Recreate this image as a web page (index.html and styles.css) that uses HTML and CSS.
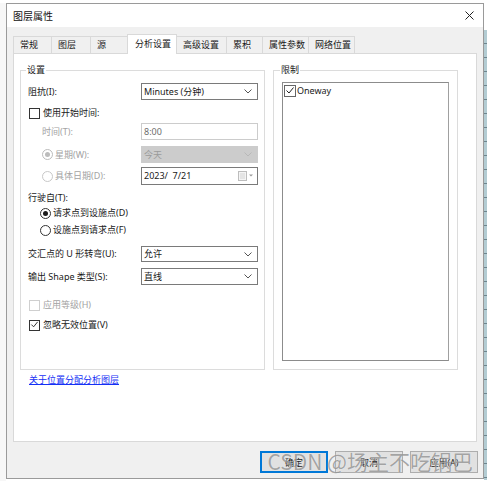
FILE: index.html
```html
<!DOCTYPE html>
<html lang="zh">
<head>
<meta charset="utf-8">
<title>图层属性</title>
<link rel="stylesheet" href="styles.css">
</head>
<body>
<div class="screen">
  <div class="gutter"></div>
  <div class="window">
    <div class="titlebar">
      <span class="title">图层属性</span>
      <svg class="close" width="9" height="9" viewBox="0 0 9 9"><path d="M0.5 0.5L8.5 8.5M8.5 0.5L0.5 8.5" stroke="#222" stroke-width="1"/></svg>
    </div>
    <div class="client">
      <div class="tabs">
        <div class="tab w38">常规</div>
        <div class="tab w39">图层</div>
        <div class="tab w37">源</div>
        <div class="tab w50 active">分析设置</div>
        <div class="tab w49">高级设置</div>
        <div class="tab w36">累积</div>
        <div class="tab w46">属性参数</div>
        <div class="tab w47">网络位置</div>
      </div>
      <div class="panel">
        <div class="groups">
          <fieldset class="group left">
            <legend>设置</legend>
            <div class="row r1">
              <span class="label">阻抗(I):</span>
              <div class="select"><span>Minutes (分钟)</span><svg width="8" height="5" viewBox="0 0 8 5"><path d="M0.5 0.5L4 4L7.5 0.5" fill="none" stroke="#555"/></svg></div>
            </div>
            <div class="row r2">
              <span class="cb"></span><span class="cbtext">使用开始时间:</span>
            </div>
            <div class="row r3">
              <span class="label dis indent">时间(T):</span>
              <div class="input dis-input"><span>8:00</span></div>
            </div>
            <div class="row r4">
              <span class="radio checked-dis indent-r"></span><span class="rtext dis">星期(W):</span>
              <div class="select dis-select"><span>今天</span><svg width="8" height="5" viewBox="0 0 8 5"><path d="M0.5 0.5L4 4L7.5 0.5" fill="none" stroke="#b8b8b8"/></svg></div>
            </div>
            <div class="row r5">
              <span class="radio dis-r indent-r"></span><span class="rtext dis">具体日期(D):</span>
              <div class="input date"><span>2023/&nbsp; 7/21</span>
                <span class="cal"><svg width="16" height="10" viewBox="0 0 16 10"><rect x="0.5" y="0.5" width="8" height="9" fill="#f4f4f4" stroke="#bdbdbd"/><path d="M2 3H7M2 5H7M2 7H7" stroke="#d4d4d4"/><path d="M11 3.5L13 5.5L15 3.5Z" fill="#9a9a9a"/></svg></span>
              </div>
            </div>
            <div class="row r6">
              <span class="label">行驶自(T):</span>
            </div>
            <div class="row r7">
              <span class="radio on indent-r2"></span><span class="rtext">请求点到设施点(D)</span>
            </div>
            <div class="row r8">
              <span class="radio indent-r2"></span><span class="rtext">设施点到请求点(F)</span>
            </div>
            <div class="row r9">
              <span class="label">交汇点的 U 形转弯(U):</span>
              <div class="select sel16"><span>允许</span><svg width="8" height="5" viewBox="0 0 8 5"><path d="M0.5 0.5L4 4L7.5 0.5" fill="none" stroke="#555"/></svg></div>
            </div>
            <div class="row r10">
              <span class="label">输出 Shape 类型(S):</span>
              <div class="select"><span>直线</span><svg width="8" height="5" viewBox="0 0 8 5"><path d="M0.5 0.5L4 4L7.5 0.5" fill="none" stroke="#555"/></svg></div>
            </div>
            <div class="row r11">
              <span class="cb cb-dis"></span><span class="cbtext dis">应用等级(H)</span>
            </div>
            <div class="row r12">
              <span class="cb"><svg width="10" height="10" viewBox="0 0 10 10"><path d="M1.5 4.5L4 7L8.5 1.5" fill="none" stroke="#222" stroke-width="1"/></svg></span><span class="cbtext">忽略无效位置(V)</span>
            </div>
          </fieldset>
          <fieldset class="group right">
            <legend>限制</legend>
            <div class="listbox">
              <div class="item">
                <span class="cb cb-item"><svg width="10" height="10" viewBox="0 0 10 10"><path d="M1.5 4.5L4 7L8.5 1.5" fill="none" stroke="#222" stroke-width="1"/></svg></span><span class="itemtext">Oneway</span>
              </div>
            </div>
          </fieldset>
        </div>
        <a class="link" href="#">关于位置分配分析图层</a>
      </div>
      <div class="buttons">
        <div class="btn default">确定</div>
        <div class="btn">取消</div>
        <div class="btn">应用(A)</div>
        <div class="watermark">CSDN @场主不吃锅巴</div>
      </div>
    </div>
  </div>
  <div class="strip"></div>
</div>
</body>
</html>
```

FILE: styles.css
```css
* { box-sizing: border-box; }
html, body { margin: 0; padding: 0; }
body {
  width: 487px;
  height: 481px;
  overflow: hidden;
  background: #ffffff;
  font-family: "Noto Sans", "Noto Sans CJK SC", sans-serif;
  font-size: 9px;
  color: #1a1a1a;
}
.screen {
  display: flex;
  height: 481px;
  padding-top: 3px;
}
.gutter { width: 6px; flex: none; background: #f7f7f7; }
.window {
  width: 478px;
  height: 476px;
  flex: none;
  border: 1px solid #9a9a9a;
  display: flex;
  flex-direction: column;
  background: #f0f0f0;
}
.strip {
  width: 3px;
  flex: none;
  margin-top: 27px;
  height: 450px;
  background: repeating-linear-gradient(180deg, #b3ccd3 0, #b3ccd3 13px, #6d858e 13px, #6d858e 14px);
}
.titlebar {
  height: 23px;
  flex: none;
  background: #ffffff;
  display: flex;
  align-items: center;
  justify-content: space-between;
  padding: 0 9px 0 6px;
}
.title { font-size: 10px; line-height: 12px; color: #111; }
.close { display: block; }
.client {
  flex: 1;
  display: flex;
  flex-direction: column;
  padding: 0 5px 0 6px;
}
.tabs {
  display: flex;
  align-items: flex-end;
  height: 19px;
  margin-top: 7px;
  position: relative;
  z-index: 2;
}
.tab {
  height: 17px;
  border: 1px solid #d9d9d9;
  border-bottom: none;
  border-right: none;
  background: #f0f0f0;
  padding-left: 6px;
  line-height: 16px;
  color: #1a1a1a;
  white-space: nowrap;
}
.tab:last-child { border-right: 1px solid #d9d9d9; }
.tab.active {
  height: 20px;
  background: #ffffff;
  border-right: 1px solid #d9d9d9;
  margin-bottom: -1px;
  padding-left: 7px;
  line-height: 17px;
}
.tab.active + .tab { border-left: none; }
.w36 { width: 36px; }
.w37 { width: 37px; }
.w38 { width: 38px; }
.w39 { width: 39px; }
.w46 { width: 46px; }
.w47 { width: 47px; }
.w49 { width: 49px; }
.w50 { width: 50px; }
.panel {
  width: 464px;
  height: 389px;
  background: #ffffff;
  border: 1px solid #d9d9d9;
  padding: 0 6px;
  display: flex;
  flex-direction: column;
}
.groups {
  display: flex;
  gap: 8px;
  margin-top: 10px;
}
.group {
  margin: 0;
  border: 1px solid #dcdcdc;
  height: 306px;
  display: flex;
  flex-direction: column;
  min-width: 0;
}
.group legend {
  padding: 0 1px;
  margin-left: -2px;
  line-height: 12px;
  height: 12px;
  color: #1a1a1a;
}
.group.left { width: 245px; padding: 7px 6px 0 7px; }
.group.right { width: 185px; padding: 6px 8px 0 8px; }
.row {
  display: flex;
  align-items: center;
  flex: none;
  line-height: 12px;
}
.r1 { height: 17px; }
.r2 { height: 16px; margin-top: 5px; }
.r3 { height: 17px; margin-top: 2px; }
.r4 { height: 17px; margin-top: 6px; }
.r5 { height: 18px; margin-top: 4px; }
.r6 { height: 14px; margin-top: 6px; }
.r7 { height: 14px; margin-top: 1px; }
.r8 { height: 14px; margin-top: 3px; }
.r9 { height: 16px; margin-top: 9px; }
.r10 { height: 17px; margin-top: 6px; }
.r11 { height: 14px; margin-top: 13px; }
.r12 { height: 14px; margin-top: 6px; }
.label { width: 113px; flex: none; white-space: nowrap; }
.indent { padding-left: 14px; }
.dis { color: #a3a3a3; }
.select, .input {
  width: 117px;
  height: 100%;
  flex: none;
  border: 1px solid #7a7a7a;
  background: #ffffff;
  display: flex;
  align-items: center;
  justify-content: space-between;
  padding: 0 5px 0 2px;
  white-space: nowrap;
}
.sel16 { height: 16px; }
.dis-input { border-color: #cccccc; color: #6d6d6d; }
.dis-select { background: #cccccc; border-color: #cccccc; color: #9b9b9b; }
.date { border-color: #7a7a7a; padding-right: 3px; }
.cal { display: flex; }
.cb {
  width: 11px;
  height: 11px;
  flex: none;
  border: 1px solid #333333;
  background: #ffffff;
  margin-left: 1px;
  display: flex;
  align-items: center;
  justify-content: center;
}
.cb svg { display: block; }
.cb-dis { border-color: #cfcfcf; }
.cbtext { margin-left: 3px; white-space: nowrap; }
.radio {
  width: 11px;
  height: 11px;
  flex: none;
  border: 1px solid #333333;
  border-radius: 50%;
  background: #ffffff;
  display: flex;
  align-items: center;
  justify-content: center;
}
.radio.on::after {
  content: "";
  width: 5px;
  height: 5px;
  border-radius: 50%;
  background: #1a1a1a;
}
.radio.checked-dis { border-color: #bcbcbc; }
.radio.checked-dis::after {
  content: "";
  width: 5px;
  height: 5px;
  border-radius: 50%;
  background: #bcbcbc;
}
.radio.dis-r { border-color: #c8c8c8; }
.indent-r { margin-left: 14px; }
.indent-r2 { margin-left: 12px; }
.rtext { margin-left: 2px; white-space: nowrap; }
.r4 .rtext, .r5 .rtext { width: 86px; flex: none; }
.listbox {
  width: 167px;
  height: 279px;
  border: 1px solid #8c8c8c;
  border-right-color: #a0a0a0;
  background: #ffffff;
  padding: 2px 1px;
}
.item { display: flex; align-items: center; height: 12px; }
.cb-item { border-color: #666; margin-left: 0; width: 12px; height: 12px; }
.itemtext { margin-left: 1px; line-height: 12px; }
.link {
  margin-top: 4px;
  margin-left: 9px;
  color: #1530f5;
  text-decoration: underline;
  line-height: 12px;
  align-self: flex-start;
}
.buttons {
  display: flex;
  justify-content: flex-end;
  gap: 7px;
  margin-top: 9px;
  height: 22px;
  position: relative;
}
.btn {
  width: 68px;
  height: 22px;
  border: 1px solid #adadad;
  background: #e1e1e1;
  display: flex;
  align-items: center;
  justify-content: center;
  font-size: 9px;
  color: #222;
}
.btn.default { border: 2px solid #0078d7; }
.watermark {
  position: absolute;
  right: 5px;
  top: -2px;
  font-family: "Noto Sans CJK SC", sans-serif;
  font-size: 21px;
  line-height: 24px;
  color: rgba(80, 80, 80, 0.5);
  white-space: nowrap;
  pointer-events: none;
  text-shadow: 0 0 1px rgba(255,255,255,0.8);
}
```
